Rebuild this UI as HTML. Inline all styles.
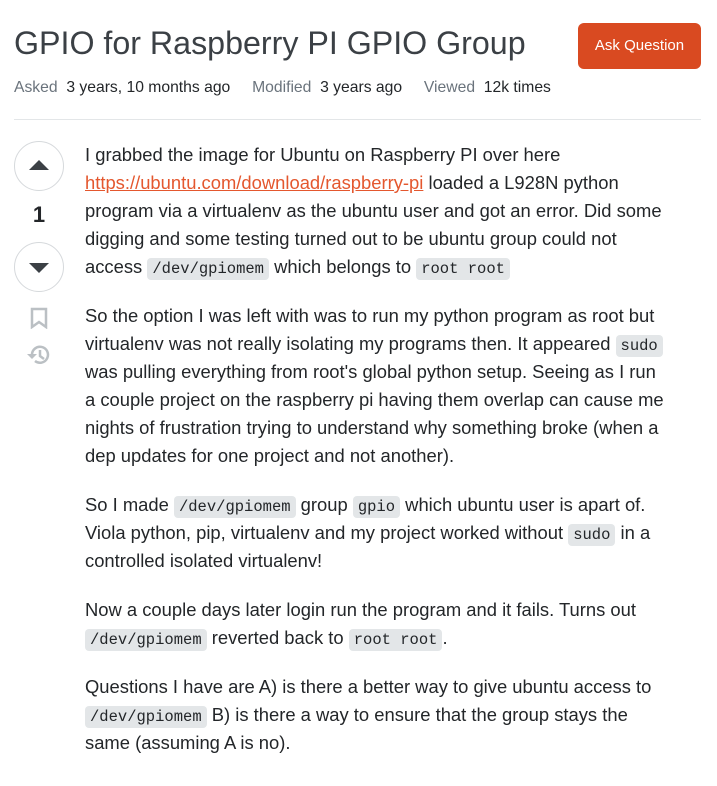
<!DOCTYPE html>
<html><head><meta charset="utf-8"><style>
body{margin:0;background:#fff;font-family:"Liberation Sans",sans-serif;color:#232629;width:717px;height:786px;overflow:hidden;position:relative}
h1{position:absolute;left:14px;top:25px;margin:0;font-weight:normal;font-size:32.2px;color:#3b4045;white-space:nowrap}
.btn{position:absolute;left:578px;top:23px;width:123px;height:46px;background:#d94a21;border-radius:6px;color:#fff;font-size:15px;line-height:46px;text-align:center}
.meta{position:absolute;left:14px;top:79px;font-size:15.7px;color:#232629;white-space:nowrap}
.meta span{color:#6a737c}
.hr{position:absolute;left:14px;top:119px;width:687px;height:1px;background:#e3e6e8}
.vote{position:absolute;left:14px;width:50px;height:50px;border:1px solid #d6d9dc;border-radius:50%;box-sizing:border-box}
.up:after,.dn:after{content:"";position:absolute;left:14px;border-left:10px solid transparent;border-right:10px solid transparent}
.up:after{top:18px;border-bottom:10px solid #3b4045}
.dn:after{top:20px;border-top:10px solid #3b4045}
.cnt{position:absolute;left:14px;width:50px;top:202px;text-align:center;font-size:22px;font-weight:bold}
.body{position:absolute;left:85px;top:141px;font-size:18.4px;line-height:28px;white-space:nowrap}
p{margin:0 0 21px;line-height:28px}
a{color:#e4572e}
code{font-family:"Liberation Mono",monospace;font-size:15.5px;line-height:1;background:#e3e6e8;border-radius:4px;padding:2px 5px;vertical-align:0}
</style></head><body>
<h1>GPIO for Raspberry PI GPIO Group</h1>
<div class="btn">Ask Question</div>
<div class="meta"><span>Asked</span>&nbsp; 3 years, 10 months ago &nbsp;&nbsp;&nbsp; <span>Modified</span>&nbsp; 3 years ago &nbsp;&nbsp;&nbsp; <span>Viewed</span>&nbsp; 12k times</div>
<div class="hr"></div>
<div class="vote up" style="top:141px"></div>
<div class="cnt">1</div>
<div class="vote dn" style="top:242px"></div>
<svg style="position:absolute;left:29px;top:307px" width="20" height="22" viewBox="0 0 20 22"><path d="M3 2h14v18l-7-5-7 5z" fill="none" stroke="#bbc0c4" stroke-width="2.5"/></svg>
<svg style="position:absolute;left:26px;top:343px" width="26" height="24" viewBox="0 0 26 24"><path d="M6 12a8 8 0 1 1 3 6" fill="none" stroke="#bbc0c4" stroke-width="2.5"/><path d="M1 11l5 5 5-5z" fill="#bbc0c4"/><path d="M14 7v6l4 3" fill="none" stroke="#bbc0c4" stroke-width="2.5"/></svg>
<div class="body">
<p>I grabbed the image for Ubuntu on Raspberry PI over here<br><a href="#">https://ubuntu.com/download/raspberry-pi</a> loaded a L928N python<br>program via a virtualenv as the ubuntu user and got an error. Did some<br>digging and some testing turned out to be ubuntu group could not<br>access <code>/dev/gpiomem</code> which belongs to <code>root root</code></p>
<p>So the option I was left with was to run my python program as root but<br>virtualenv was not really isolating my programs then. It appeared <code>sudo</code><br>was pulling everything from root's global python setup. Seeing as I run<br>a couple project on the raspberry pi having them overlap can cause me<br>nights of frustration trying to understand why something broke (when a<br>dep updates for one project and not another).</p>
<p>So I made <code>/dev/gpiomem</code> group <code>gpio</code> which ubuntu user is apart of.<br>Viola python, pip, virtualenv and my project worked without <code>sudo</code> in a<br>controlled isolated virtualenv!</p>
<p>Now a couple days later login run the program and it fails. Turns out<br><code>/dev/gpiomem</code> reverted back to <code>root root</code>.</p>
<p>Questions I have are A) is there a better way to give ubuntu access to<br><code>/dev/gpiomem</code> B) is there a way to ensure that the group stays the<br>same (assuming A is no).</p>
</div>
</body></html>
